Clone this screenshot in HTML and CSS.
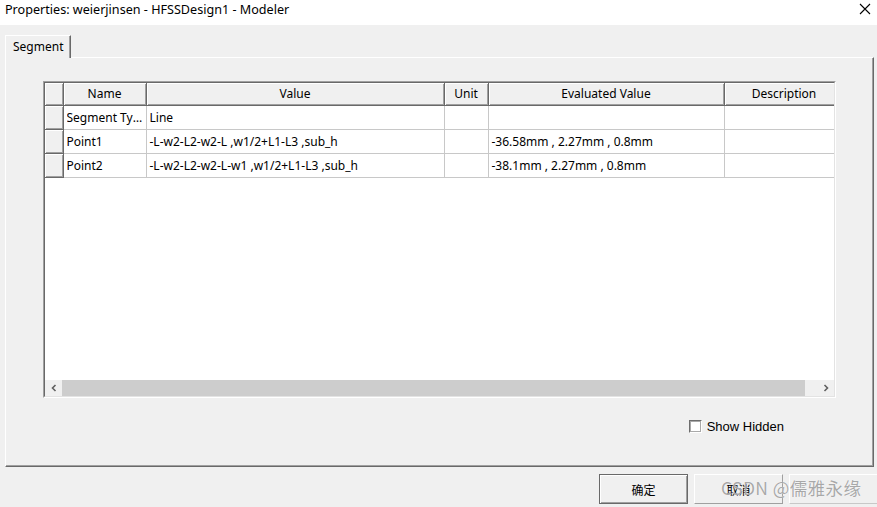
FILE: index.html
```html
<!DOCTYPE html>
<html lang="en">
  <head>
    <meta charset="UTF-8" />
    <title>Properties</title>
    <link rel="stylesheet" href="styles.css">
  </head>
  <body>
    <div class="window">
      <div class="titlebar">
        <span class="title">Properties: weierjinsen - HFSSDesign1 - Modeler</span>
        <svg class="close" width="12" height="12" viewBox="0 0 12 12">
          <path d="M1 1 L11 11 M11 1 L1 11" stroke="#000" stroke-width="1.1" fill="none" />
        </svg>
      </div>

      <div class="tabs">
        <div class="tab">Segment</div>
      </div>

      <div class="panel">
        <div class="grid">
          <div class="grid-inner">
            <div class="grid-body">
              <table class="props">
                <colgroup>
                  <col style="width: 18px" />
                  <col style="width: 83px" />
                  <col style="width: 298px" />
                  <col style="width: 44px" />
                  <col style="width: 236px" />
                  <col style="width: 120px" />
                </colgroup>
                <thead>
                  <tr>
                    <th></th>
                    <th>Name</th>
                    <th>Value</th>
                    <th>Unit</th>
                    <th>Evaluated Value</th>
                    <th>Description</th>
                  </tr>
                </thead>
                <tbody>
                  <tr>
                    <td class="row-head"></td>
                    <td><span class="clip">Segment Type</span></td>
                    <td>Line</td>
                    <td></td>
                    <td></td>
                    <td></td>
                  </tr>
                  <tr>
                    <td class="row-head"></td>
                    <td>Point1</td>
                    <td>-L-w2-L2-w2-L ,w1/2+L1-L3 ,sub_h</td>
                    <td></td>
                    <td>-36.58mm , 2.27mm , 0.8mm</td>
                    <td></td>
                  </tr>
                  <tr>
                    <td class="row-head"></td>
                    <td>Point2</td>
                    <td>-L-w2-L2-w2-L-w1 ,w1/2+L1-L3 ,sub_h</td>
                    <td></td>
                    <td>-38.1mm , 2.27mm , 0.8mm</td>
                    <td></td>
                  </tr>
                </tbody>
              </table>
            </div>
            <div class="hscroll">
              <div class="arrow">
                <svg width="8" height="8" viewBox="0 0 8 8"><path d="M5.5 1 L2.5 4 L5.5 7" stroke="#606060" stroke-width="1.6" fill="none" /></svg>
              </div>
              <div class="thumb"></div>
              <div class="arrow">
                <svg width="8" height="8" viewBox="0 0 8 8"><path d="M2.5 1 L5.5 4 L2.5 7" stroke="#606060" stroke-width="1.6" fill="none" /></svg>
              </div>
            </div>
          </div>
        </div>

        <div class="options">
          <label class="check"><span class="box"></span>Show Hidden</label>
        </div>
      </div>

      <div class="buttons">
        <button class="btn default">确定</button>
        <button class="btn">取消</button>
        <button class="btn faint"></button>
      </div>

      <div class="watermark">CSDN @儒雅永缘</div>
    </div>
  </body>
</html>
```

FILE: styles.css
```css
body {
    margin: 0;
    background-color: #f0f0f0;
    font-family: "Noto Sans", "Noto Sans CJK SC", sans-serif;
    font-size: 12px;
    color: #000;
}

.window {
    position: relative;
    width: 877px;
    height: 507px;
    overflow: hidden;
}

.titlebar {
    height: 25px;
    background-color: #fff;
    display: flex;
    justify-content: space-between;
    align-items: flex-start;
    padding: 0 6px 0 5px;
    box-sizing: border-box;
}

.title {
    font-size: 12.6px;
    line-height: 19px;
}

.close {
    margin-top: 3px;
}

.tabs {
    display: flex;
    padding: 10px 0 0 5px;
}

.tab {
    height: 22px;
    padding: 0 7px 0 7px;
    line-height: 21px;
    border-top: 1px solid #fff;
    border-left: 1px solid #fff;
    border-right: 1px solid #696969;
    box-shadow: inset -1px 0 #a0a0a0;
    background-color: #f0f0f0;
    margin-bottom: -1px;
    position: relative;
}

.panel {
    margin-left: 5px;
    width: 869px;
    height: 410px;
    box-sizing: border-box;
    border-top: 1px solid #fff;
    border-left: 1px solid #fff;
    border-right: 1px solid #696969;
    border-bottom: 1px solid #696969;
    box-shadow: inset -1px -1px #a0a0a0;
    padding: 23px 0 0 37px;
}

.grid {
    width: 793px;
    height: 317px;
    box-sizing: border-box;
    border: 1px solid;
    border-color: #a0a0a0 #fff #fff #a0a0a0;
}

.grid-inner {
    height: 100%;
    box-sizing: border-box;
    border: 1px solid;
    border-color: #696969 #e3e3e3 #e3e3e3 #696969;
    background-color: #fff;
    display: flex;
    flex-direction: column;
}

.grid-body {
    flex: 1;
    overflow: hidden;
}

.props {
    border-collapse: collapse;
    table-layout: fixed;
    width: 799px;
}

.props th {
    height: 22px;
    padding: 0;
    font-weight: normal;
    text-align: center;
    background-color: #f0f0f0;
    border-right: 1px solid #696969;
    border-bottom: 1px solid #696969;
    box-shadow: inset 1px 1px #fff, inset -1px -1px #a0a0a0;
    box-sizing: border-box;
}

.props td {
    height: 24px;
    padding: 0 3px;
    border-right: 1px solid #c8c8c8;
    border-bottom: 1px solid #c8c8c8;
    white-space: nowrap;
    overflow: hidden;
    box-sizing: border-box;
}

.props td.row-head {
    background-color: #f0f0f0;
    border-right: 1px solid #696969;
    border-bottom: 1px solid #696969;
    box-shadow: inset 1px 1px #fff, inset -1px -1px #a0a0a0;
}

.clip {
    display: block;
    overflow: hidden;
    text-overflow: ellipsis;
    white-space: nowrap;
}

.hscroll {
    height: 16px;
    display: flex;
    background-color: #f0f0f0;
}

.arrow {
    width: 17px;
    display: flex;
    align-items: center;
    justify-content: center;
}

.thumb {
    width: 743px;
    background-color: #cdcdcd;
}

.hscroll .arrow:last-child {
    margin-left: auto;
}

.options {
    display: flex;
    justify-content: flex-end;
    padding: 21px 89px 0 0;
}

.check {
    display: flex;
    align-items: center;
    gap: 5px;
    font-family: "Liberation Sans", sans-serif;
    font-size: 13px;
}

.box {
    width: 11px;
    height: 11px;
    background-color: #fff;
    border: 1px solid;
    border-color: #6d6d6d #fff #fff #6d6d6d;
    box-shadow: 0 0 0 1px #a9a9a9 inset;
}

.buttons {
    display: flex;
    justify-content: flex-end;
    gap: 6px;
    padding: 7px 1px 0 0;
}

.btn {
    width: 89px;
    height: 30px;
    font-family: "Noto Sans CJK SC", sans-serif;
    font-size: 12px;
    background-color: #f0f0f0;
    border: 1px solid;
    border-color: #fff #a0a0a0 #a0a0a0 #fff;
    padding: 0;
}

.btn.default {
    border: 1px solid #696969;
    box-shadow: inset 1px 1px #fff, inset -1px -1px #a0a0a0;
}

.btn.faint {
    border-color: #fff #c8c8c8 #c8c8c8 #fff;
    margin-right: -2px;
}

.watermark {
    position: absolute;
    left: 721px;
    top: 475px;
    font-family: "Noto Sans CJK SC", sans-serif;
    font-size: 17.5px;
    color: rgba(140, 140, 140, 0.75);
    text-shadow: 0 0 1px #fff;
    letter-spacing: 0.4px;
}
```
